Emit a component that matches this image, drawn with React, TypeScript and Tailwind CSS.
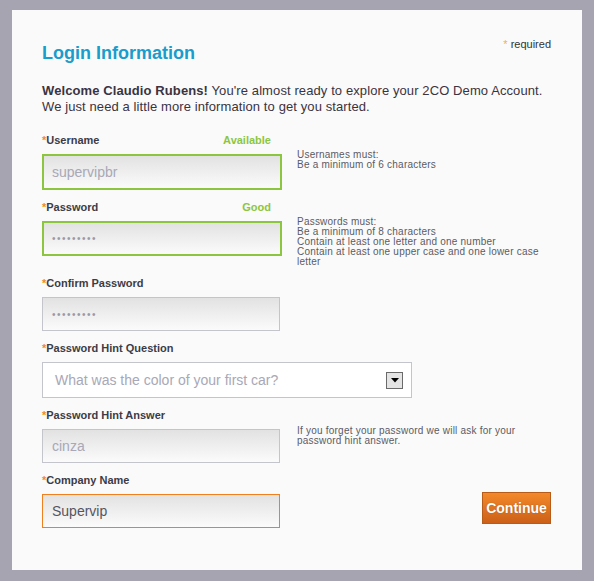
import React from "react";

const font = { fontFamily: '"Liberation Sans", Arial, sans-serif' };

function Label({ text, status }: { text: string; status?: string }) {
  return (
    <div className="flex justify-between w-[229px] h-[14px] leading-[14px] text-[11px] font-bold text-[#3c3c46] mb-[7px]">
      <span>
        <span className="text-[#f08a2a]">*</span>
        {text}
      </span>
      {status && <span className="text-[#8cc63f]">{status}</span>}
    </div>
  );
}

function Help({ lines, pt }: { lines: string[]; pt: string }) {
  return (
    <div className={`ml-[15px] w-[250px] text-[10px] leading-[10px] tracking-[0.22px] text-[#5a5a64] ${pt}`}>
      {lines.map((l, i) => (
        <div key={i}>{l}</div>
      ))}
    </div>
  );
}

export default function App() {
  return (
    <div style={font} className="w-[594px] h-[581px] bg-[#a5a4b0] pt-[10px] pl-[12px]">
      <div className="w-[570px] h-[560px] bg-[#fafafa] pt-[27px] pl-[30px] pr-[31px]">
        <div className="flex justify-between items-start">
          <div className="mt-[5px] text-[18px] leading-[22px] font-bold text-[#1a9ccc]">Login Information</div>
          <div className="text-[11px] leading-[14px] text-[#333]">
            <span className="text-[#f5a868]">*</span> required
          </div>
        </div>
        <div className="mt-[19px] text-[13px] leading-[16px] tracking-[0.1px] text-[#3a3340]">
          <b>Welcome Claudio Rubens!</b> You're almost ready to explore your 2CO Demo Account.
          <br />
          We just need a little more information to get you started.
        </div>

        {/* Username */}
        <div className="flex mt-[18px]">
          <div className="w-[240px]">
            <Label text="Username" status="Available" />
            <div className="h-[36px] border-2 border-[#8cc63f] bg-gradient-to-b from-[#e2e2e2] to-[#fbfbfb] flex items-center pl-[8px] text-[14px] text-[#a8a8b6]">
              supervipbr
            </div>
          </div>
          <Help pt="pt-[17px]" lines={["Usernames must:", "Be a minimum of 6 characters"]} />
        </div>

        {/* Password */}
        <div className="flex mt-[10px]">
          <div className="w-[240px]">
            <Label text="Password" status="Good" />
            <div className="h-[35px] border-2 border-[#8cc63f] bg-gradient-to-b from-[#e2e2e2] to-[#fbfbfb] flex items-center pl-[8px] text-[10px] tracking-[1.5px] text-[#9a9aa8]">
              •••••••••
            </div>
          </div>
          <Help
            pt="pt-[17px]"
            lines={[
              "Passwords must:",
              "Be a minimum of 8 characters",
              "Contain at least one letter and one number",
              "Contain at least one upper case and one lower case",
              "letter",
            ]}
          />
        </div>

        {/* Confirm */}
        <div className="flex mt-[9px]">
          <div className="w-[240px]">
            <Label text="Confirm Password" />
            <div className="w-[238px] h-[34px] border border-[#c4c4cc] bg-gradient-to-b from-[#e2e2e2] to-[#fbfbfb] flex items-center pl-[9px] text-[10px] tracking-[1.5px] text-[#9a9aa8]">
              •••••••••
            </div>
          </div>
        </div>

        {/* Hint question */}
        <div className="mt-[10px]">
          <Label text="Password Hint Question" />
          <div className="w-[370px] h-[36px] border border-[#c4c4cc] bg-white flex items-center justify-between pl-[12px] pr-[8px] text-[14px] text-[#a8a8b6]">
            <span>What was the color of your first car?</span>
            <div className="w-[17px] h-[17px] border border-[#6a6a6a] bg-[#e4e4e4] flex items-center justify-center">
              <svg width="8" height="5" viewBox="0 0 8 5">
                <polygon points="0,0 8,0 4,4.5" fill="#000" />
              </svg>
            </div>
          </div>
        </div>

        {/* Hint answer */}
        <div className="flex mt-[10px]">
          <div className="w-[240px]">
            <Label text="Password Hint Answer" />
            <div className="w-[238px] h-[34px] border border-[#c4c4cc] bg-gradient-to-b from-[#e2e2e2] to-[#fbfbfb] flex items-center pl-[9px] text-[14px] text-[#a8a8b6]">
              cinza
            </div>
          </div>
          <Help pt="pt-[18px]" lines={["If you forget your password we will ask for your", "password hint answer."]} />
        </div>

        {/* Company */}
        <div className="flex justify-between items-start mt-[10px]">
          <div className="w-[240px]">
            <Label text="Company Name" />
            <div className="w-[238px] h-[34px] border-[1.5px] border-[#f07f1f] bg-gradient-to-b from-[#e2e2e2] to-[#fbfbfb] flex items-center pl-[9px] text-[14px] text-[#55555f]">
              Supervip
            </div>
          </div>
          <div className="mt-[19px] w-[69px] h-[32px] border border-[#b85a18] bg-gradient-to-b from-[#f3892a] to-[#cc6018] flex items-center justify-center text-[14px] font-bold text-white [text-shadow:0_0_1px_rgba(120,50,0,0.6)]">
            Continue
          </div>
        </div>
      </div>
    </div>
  );
}
